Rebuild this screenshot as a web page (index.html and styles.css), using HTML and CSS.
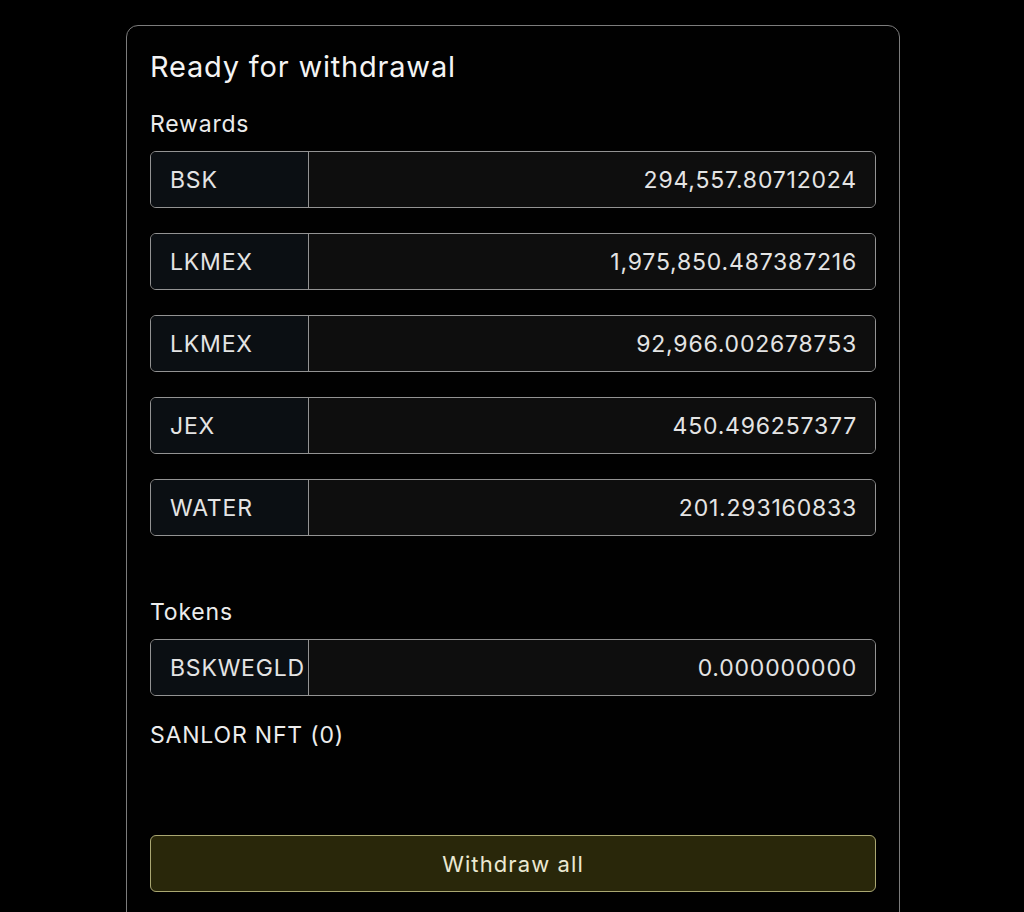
FILE: index.html
```html
<!DOCTYPE html>
<html lang="en">
<head>
<meta charset="utf-8">
<title>Ready for withdrawal</title>
<link rel="stylesheet" href="styles.css">
</head>
<body>
<main class="page">
  <section class="card">
    <h1 class="card-title">Ready for withdrawal</h1>

    <h2 class="section-label">Rewards</h2>
    <div class="token-list">
      <div class="token-row"><span class="token-name">BSK</span><span class="token-value">294,557.80712024</span></div>
      <div class="token-row"><span class="token-name">LKMEX</span><span class="token-value">1,975,850.487387216</span></div>
      <div class="token-row"><span class="token-name">LKMEX</span><span class="token-value">92,966.002678753</span></div>
      <div class="token-row"><span class="token-name">JEX</span><span class="token-value">450.496257377</span></div>
      <div class="token-row"><span class="token-name">WATER</span><span class="token-value">201.293160833</span></div>
    </div>

    <h2 class="section-label tokens-label">Tokens</h2>
    <div class="token-list">
      <div class="token-row"><span class="token-name">BSKWEGLD</span><span class="token-value">0.000000000</span></div>
    </div>

    <p class="nft-label">SANLOR NFT (0)</p>

    <button class="withdraw-btn" type="button">Withdraw all</button>
  </section>
</main>
</body>
</html>
```

FILE: styles.css
```css
* { box-sizing: border-box; }

html, body {
  margin: 0;
  padding: 0;
  background: #000;
  color: #ececec;
  font-family: Inter, "Noto Sans", "Liberation Sans", sans-serif;
  letter-spacing: 0.05em;
}

.page {
  padding-top: 25px;
}

.card {
  width: 774px;
  margin-left: calc(50% - 386px);
  border: 1px solid #7c7c7c;
  border-radius: 12px;
  padding: 23px 23px 60px;
  background: #010101;
}

.card-title {
  margin: 0;
  font-size: 29px;
  font-weight: 400;
  line-height: 36px;
  color: #f4f4f4;
}

.section-label {
  margin: 25px 0 13px;
  font-size: 23px;
  font-weight: 400;
  line-height: 28px;
  color: #ececec;
}

.tokens-label {
  margin-top: 62px;
}

.token-list {
  display: flex;
  flex-direction: column;
  gap: 25px;
}

.token-row {
  display: flex;
  height: 57px;
  border: 1px solid #939393;
  border-radius: 6px;
  overflow: hidden;
  font-size: 23px;
  color: #e4e4e4;
}

.token-name {
  flex: 0 0 158px;
  display: flex;
  align-items: center;
  padding-left: 19px;
  background: #0b0f13;
  border-right: 1px solid #939393;
  white-space: nowrap;
}

.token-value {
  flex: 1;
  display: flex;
  align-items: center;
  justify-content: flex-end;
  padding-right: 18px;
  background: #0e0e0e;
}

.nft-label {
  margin: 25px 0 86px;
  font-size: 23px;
  line-height: 28px;
  color: #ececec;
}

.withdraw-btn {
  display: block;
  width: 100%;
  height: 57px;
  border: 1px solid #aaa772;
  border-radius: 6px;
  background: #29270a;
  color: #ebe8d2;
  font-family: inherit;
  font-size: 22px;
  letter-spacing: 0.05em;
  cursor: pointer;
}
```
